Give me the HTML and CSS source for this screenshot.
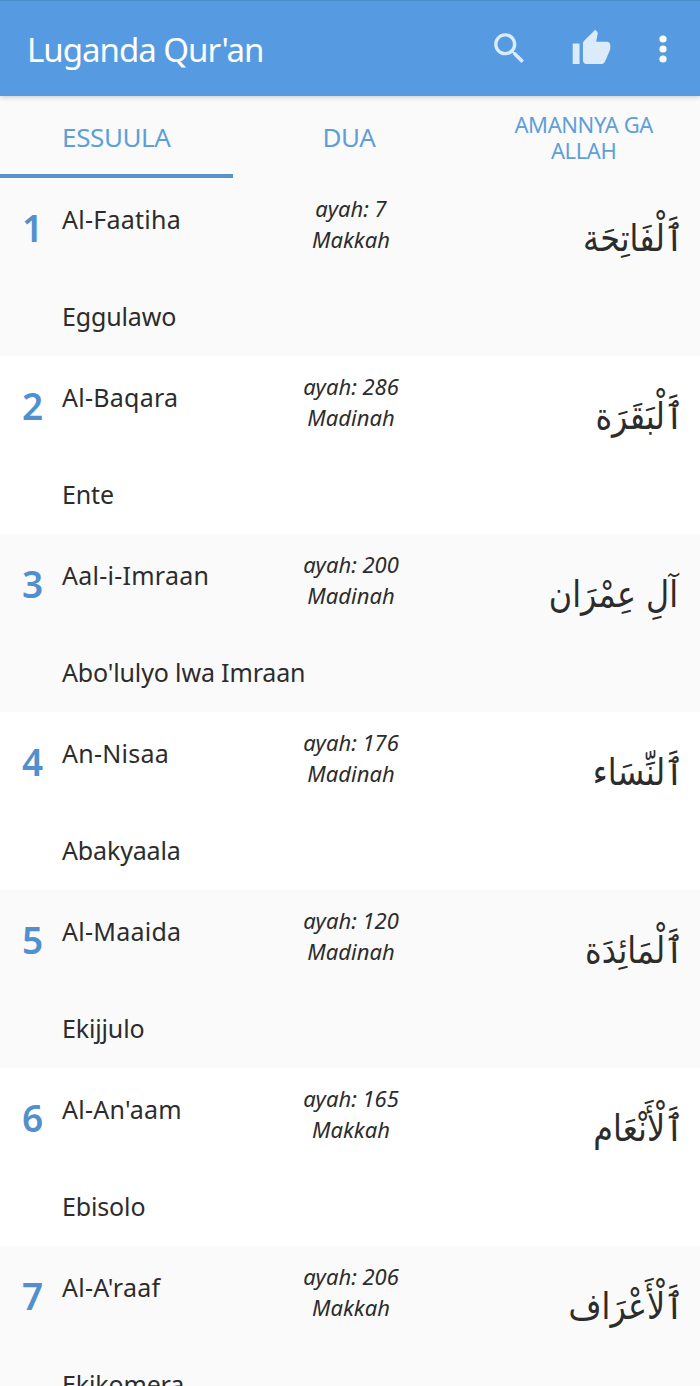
FILE: index.html
```html
<!DOCTYPE html>
<html lang="lg">
<head>
    <meta charset="UTF-8">
    <meta name="viewport" content="width=device-width, initial-scale=1.0">
    <title>Luganda Qur'an</title>
    <link rel="stylesheet" href="styles.css">
</head>
<body>
    <header class="app-bar">
        <h1 class="app-title">Luganda Qur'an</h1>
        <button class="icon-button search" aria-label="Search">
            <svg viewBox="0 0 24 24" width="41" height="41"><path d="M15.5 14h-.79l-.28-.27C15.41 12.59 16 11.11 16 9.5 16 5.91 13.09 3 9.5 3S3 5.91 3 9.5 5.91 16 9.5 16c1.61 0 3.09-.59 4.23-1.57l.27.28v.79l5 4.99L20.49 19l-4.99-5zm-6 0C7.01 14 5 11.99 5 9.5S7.01 5 9.5 5 14 7.01 14 9.5 11.99 14 9.5 14z"/></svg>
        </button>
        <button class="icon-button like" aria-label="Like">
            <svg viewBox="0 0 24 24" width="41" height="41"><path d="M1 21h4V9H1v12zm22-11c0-1.1-.9-2-2-2h-6.31l.95-4.57.03-.32c0-.41-.17-.79-.44-1.06L14.17 1 7.59 7.59C7.22 7.95 7 8.45 7 9v10c0 1.1.9 2 2 2h9c.83 0 1.54-.5 1.84-1.22l3.02-7.05c.09-.23.14-.47.14-.73v-2z"/></svg>
        </button>
        <button class="icon-button more" aria-label="More options">
            <svg viewBox="0 0 8 28" width="8" height="28"><circle cx="4" cy="4" r="3.6"/><circle cx="4" cy="14" r="3.6"/><circle cx="4" cy="24" r="3.6"/></svg>
        </button>
    </header>

    <nav class="tabs">
        <a class="tab active">ESSUULA</a>
        <a class="tab">DUA</a>
        <a class="tab small">AMANNYA GA<br>ALLAH</a>
    </nav>

    <main class="surah-list">
        <section class="surah">
            <div class="number">1</div>
            <div class="names"><span class="name">Al-Faatiha</span><span>Eggulawo</span></div>
            <div class="info">ayah: 7<br>Makkah</div>
            <div class="arabic wasla" lang="ar" dir="rtl">ٱَلْفَاتِحَة</div>
        </section>
        <section class="surah">
            <div class="number">2</div>
            <div class="names"><span class="name">Al-Baqara</span><span>Ente</span></div>
            <div class="info">ayah: 286<br>Madinah</div>
            <div class="arabic wasla" lang="ar" dir="rtl">ٱَلْبَقَرَة</div>
        </section>
        <section class="surah">
            <div class="number">3</div>
            <div class="names"><span class="name">Aal-i-Imraan</span><span>Abo'lulyo lwa Imraan</span></div>
            <div class="info">ayah: 200<br>Madinah</div>
            <div class="arabic" lang="ar" dir="rtl">آلِ عِمْرَان</div>
        </section>
        <section class="surah">
            <div class="number">4</div>
            <div class="names"><span class="name">An-Nisaa</span><span>Abakyaala</span></div>
            <div class="info">ayah: 176<br>Madinah</div>
            <div class="arabic wasla" lang="ar" dir="rtl">ٱَلنِّسَاء</div>
        </section>
        <section class="surah">
            <div class="number">5</div>
            <div class="names"><span class="name">Al-Maaida</span><span>Ekijjulo</span></div>
            <div class="info">ayah: 120<br>Madinah</div>
            <div class="arabic wasla" lang="ar" dir="rtl">ٱَلْمَائِدَة</div>
        </section>
        <section class="surah">
            <div class="number">6</div>
            <div class="names"><span class="name">Al-An'aam</span><span>Ebisolo</span></div>
            <div class="info">ayah: 165<br>Makkah</div>
            <div class="arabic wasla" lang="ar" dir="rtl">ٱَلْأَنْعَام</div>
        </section>
        <section class="surah">
            <div class="number">7</div>
            <div class="names"><span class="name">Al-A'raaf</span><span>Ekikomera</span></div>
            <div class="info">ayah: 206<br>Makkah</div>
            <div class="arabic wasla" lang="ar" dir="rtl">ٱَلْأَعْرَاف</div>
        </section>
    </main>
</body>
</html>
```

FILE: styles.css
```css
* {
    box-sizing: border-box;
}

body {
    margin: 0;
    height: 1386px;
    overflow: hidden;
    background-color: #fafafa;
    color: #2c2c2c;
    font-family: "Noto Sans", sans-serif;
}

.app-bar {
    display: flex;
    align-items: center;
    height: 96px;
    padding: 0 33px 0 27px;
    background-color: #569be1;
    border-top: 1px solid #4c8dcc;
    box-shadow: 0 1px 5px rgba(0, 0, 0, 0.2);
}

.app-title {
    flex: 1;
    margin: 0;
    padding-top: 1px;
    color: white;
    font-size: 33px;
    font-weight: 400;
    letter-spacing: -1px;
    white-space: nowrap;
}

.icon-button {
    display: flex;
    padding: 0;
    border: none;
    background: none;
    fill: #dcebfa;
}

.like {
    margin-left: 41px;
}

.more {
    margin-left: 47px;
    fill: white;
}

.tabs {
    display: flex;
    height: 82px;
}

.tab {
    flex: 1;
    display: flex;
    align-items: center;
    justify-content: center;
    padding-top: 4px;
    border-bottom: 4px solid transparent;
    color: #5f9fd8;
    font-size: 26px;
    letter-spacing: -0.4px;
    line-height: 26px;
    text-align: center;
}

.tab.small {
    padding-left: 2px;
    font-size: 22px;
}

.tab.active {
    border-color: #5794c9;
}

.surah {
    display: grid;
    grid-template-columns: 62px 200px 178px 1fr;
    height: 178px;
    padding-right: 22px;
}

.surah:nth-child(even) {
    background-color: white;
}

.number {
    padding: 24px 0 0 22px;
    color: #528fcd;
    font-size: 37px;
    font-weight: 600;
    line-height: 52px;
}

.names {
    display: flex;
    flex-direction: column;
    gap: 61px;
    padding-top: 23px;
    font-size: 25px;
    letter-spacing: -0.15px;
    line-height: 36px;
    white-space: nowrap;
}

.name {
    letter-spacing: 0.25px;
}

.info {
    padding-top: 15px;
    font-size: 22px;
    font-style: italic;
    line-height: 31px;
    text-align: center;
}

/* narrower, taller letterforms for the surah names */
.arabic {
    padding-top: 31px;
    font-family: "DejaVu Sans", sans-serif;
    font-size: 37px;
    line-height: 60px;
    white-space: nowrap;
    transform: scaleX(0.86);
    transform-origin: right;
}

.arabic.wasla {
    margin-right: -6px;
}
```
